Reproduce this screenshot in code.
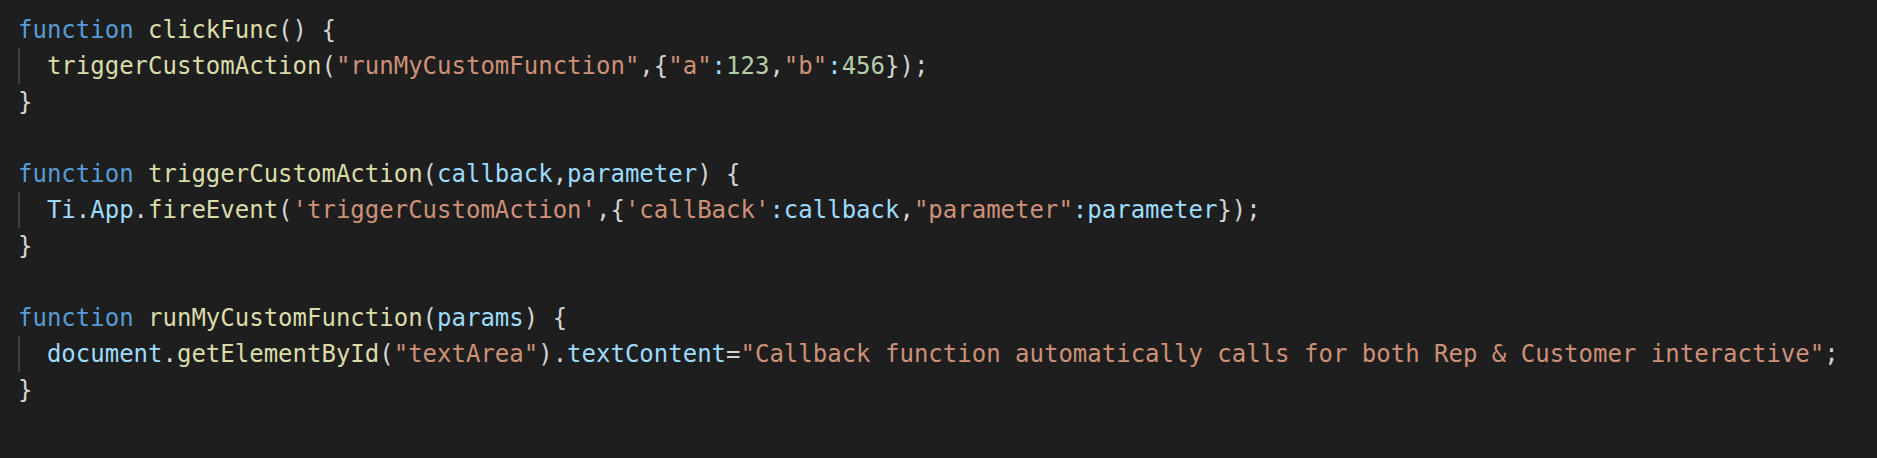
import React from "react";

type Tok = [string, string];

const K = "text-[#569cd6]";
const F = "text-[#dcdcaa]";
const S = "text-[#ce9178]";
const V = "text-[#9cdcfe]";
const N = "text-[#b5cea8]";
const P = "text-[#d4d4d4]";

const lines: { indent: boolean; toks: Tok[] }[] = [
  { indent: false, toks: [["function", K], [" ", P], ["clickFunc", F], ["() {", P]] },
  {
    indent: true,
    toks: [
      ["triggerCustomAction", F],
      ["(", P],
      ['"runMyCustomFunction"', S],
      [",{", P],
      ['"a"', S],
      [":", V],
      ["123", N],
      [",", P],
      ['"b"', S],
      [":", V],
      ["456", N],
      ["});", P],
    ],
  },
  { indent: false, toks: [["}", P]] },
  { indent: false, toks: [] },
  {
    indent: false,
    toks: [
      ["function", K],
      [" ", P],
      ["triggerCustomAction", F],
      ["(", P],
      ["callback", V],
      [",", P],
      ["parameter", V],
      [") {", P],
    ],
  },
  {
    indent: true,
    toks: [
      ["Ti", V],
      [".", P],
      ["App", V],
      [".", P],
      ["fireEvent", F],
      ["(", P],
      ["'triggerCustomAction'", S],
      [",{", P],
      ["'callBack'", S],
      [":", V],
      ["callback", V],
      [",", P],
      ['"parameter"', S],
      [":", V],
      ["parameter", V],
      ["});", P],
    ],
  },
  { indent: false, toks: [["}", P]] },
  { indent: false, toks: [] },
  {
    indent: false,
    toks: [
      ["function", K],
      [" ", P],
      ["runMyCustomFunction", F],
      ["(", P],
      ["params", V],
      [") {", P],
    ],
  },
  {
    indent: true,
    toks: [
      ["document", V],
      [".", P],
      ["getElementById", F],
      ["(", P],
      ['"textArea"', S],
      [")", P],
      [".", P],
      ["textContent", V],
      ["=", P],
      ['"Callback function automatically calls for both Rep & Customer interactive"', S],
      [";", P],
    ],
  },
  { indent: false, toks: [["}", P]] },
];

export default function App() {
  return (
    <div
      className="w-full h-[458px] bg-[#1e1e1e] pt-[12px] pl-[18px] overflow-hidden"
      style={{ fontFamily: '"DejaVu Sans Mono", Menlo, monospace' }}
    >
      {lines.map((l, i) => (
        <div key={i} className="h-[36px] leading-[36px] text-[24px] whitespace-pre">
          {l.indent && (
            <span className="inline-block w-[2ch] h-[36px] align-top shadow-[inset_2px_0_0_#404040]">{"  "}</span>
          )}
          {l.toks.map((t, j) => (
            <span key={j} className={t[1]}>
              {t[0]}
            </span>
          ))}
        </div>
      ))}
    </div>
  );
}
